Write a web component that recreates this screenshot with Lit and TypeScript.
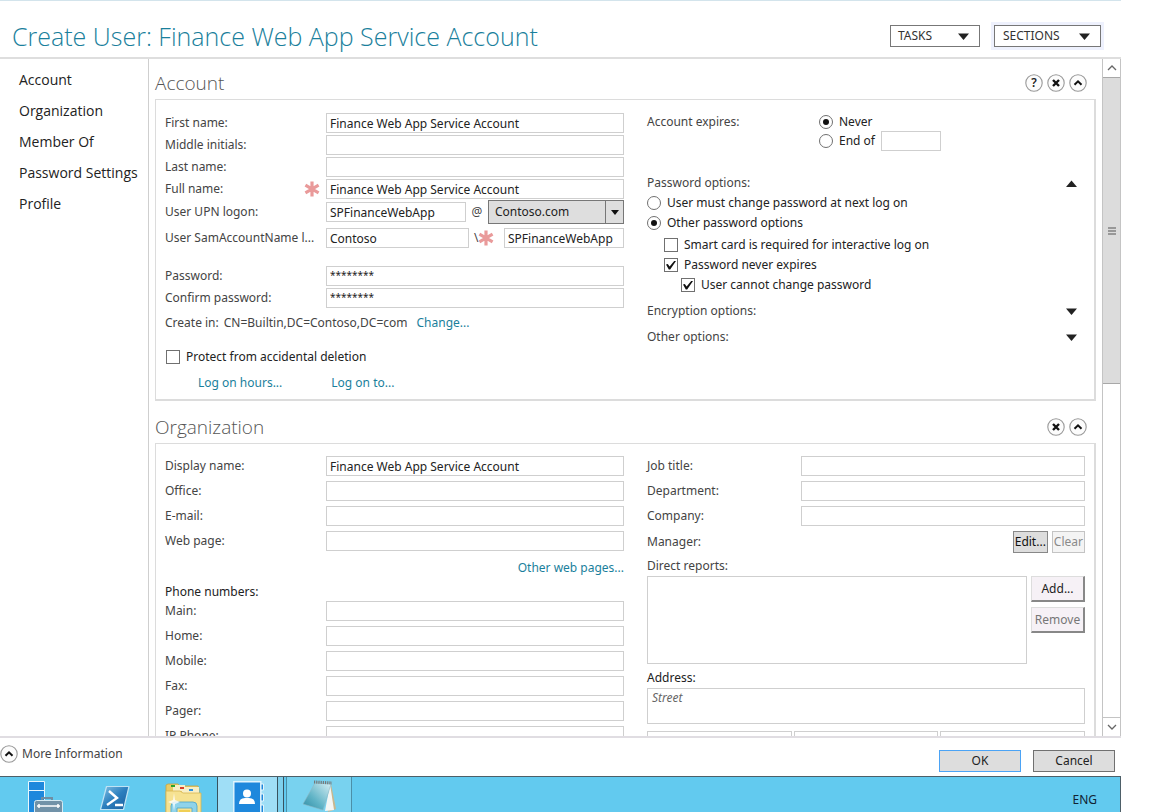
import { LitElement, html, css, svg, nothing } from "lit";
import { customElement, property } from "lit/decorators.js";

const controls = css`
  * { box-sizing: border-box; }
  button, input, select, textarea { font: inherit; color: inherit; margin: 0; border-radius: 0; }
  input[type="text"], textarea {
    width: 100%; min-width: 0; height: 20px; padding: 0 3px; border: 1px solid #cfcfcf;
    background: #fff; color: #222; outline: none; display: block;
  }
  input::placeholder, textarea::placeholder { font-style: italic; color: #666; opacity: 1; }
  a { color: #1a7f9c; text-decoration: none; }
  a:hover { text-decoration: underline; }
  input[type="radio"], input[type="checkbox"] {
    appearance: none; flex: none; width: 14px; height: 14px; border: 1px solid #707070;
    background: #fff; display: grid; place-items: center;
  }
  input[type="radio"] { border-radius: 50%; }
  input[type="radio"]:checked::before {
    content: ""; width: 6px; height: 6px; border-radius: 50%; background: #111;
  }
  input[type="checkbox"]:checked::before {
    content: ""; width: 10px; height: 9px; background: #111;
    clip-path: polygon(0 45%, 18% 40%, 36% 66%, 86% 0, 100% 5%, 42% 100%, 28% 100%);
  }
`;

const glyphs = {
  help: svg`<text x="9" y="13" text-anchor="middle" font-size="12" font-weight="600" fill="#222">?</text>`,
  close: svg`<path d="M6 6l6 6M12 6l-6 6" stroke="#111" stroke-width="2.4" fill="none"/>`,
  up: svg`<path d="M5.5 10.8L9 7.3l3.5 3.5" stroke="#111" stroke-width="2" fill="none"/>`,
};

@customElement("round-button")
export class RoundButton extends LitElement {
  @property() kind: keyof typeof glyphs = "up";
  @property() label = "";
  static styles = [controls, css`
    :host { display: block; }
    button { display: block; padding: 0; border: 0; background: none; width: 18px; height: 18px; }
    svg { display: block; }
  `];
  render() {
    return html`<button aria-label=${this.label}>
      <svg width="18" height="18" viewBox="0 0 18 18">
        <circle cx="9" cy="9" r="8.2" fill="#fcfcfc" stroke="#999" stroke-width="1.1"/>
        ${glyphs[this.kind]}
      </svg></button>`;
  }
}

@customElement("form-section")
export class FormSection extends LitElement {
  @property() heading = "";
  @property({ type: Boolean }) help = false;
  static styles = css`
    :host { display: block; }
    .head { display: flex; align-items: center; gap: 4px; height: 32px; padding-right: 9px; }
    h2 { flex: 1; margin: 0; font: 300 19px/26px "Open Sans", sans-serif; color: #555; }
    .panel {
      border: 1px solid #dcdcdc; border-width: 1px 2px 2px 1px; padding: 12px 9px 6px;
      display: grid; grid-template-columns: 459fr 438fr; column-gap: 23px;
    }
  `;
  render() {
    return html`
      <div class="head">
        <h2>${this.heading}</h2>
        ${this.help ? html`<round-button kind="help" label="Help"></round-button>` : nothing}
        <round-button kind="close" label="Remove section"></round-button>
        <round-button kind="up" label="Collapse section"></round-button>
      </div>
      <div class="panel"><slot name="left"></slot><slot name="right"></slot></div>`;
  }
}

const star = html`<svg class="star" width="16" height="16" viewBox="0 0 16 16" aria-label="Required">
  <path d="M8 0.5v15M1.4 4.2l13.2 7.6M14.6 4.2L1.4 11.8" stroke="#e99a9a" stroke-width="3.2" fill="none"/></svg>`;

const triangle = (up: boolean) => html`<svg class="tri" width="11" height="7" viewBox="0 0 11 7">
  <path d=${up ? "M0 7L5.5 0.5 11 7z" : "M0 0.5h11L5.5 7z"} fill="#222"/></svg>`;

@customElement("account-form")
export class AccountForm extends LitElement {
  static styles = [controls, css`
    :host { display: block; }
    .row { display: grid; grid-template-columns: 161px 1fr; align-items: center; height: 22px; }
    .row.upn { height: 24px; }
    .row.sam { height: 28px; }
    .row > label { display: flex; justify-content: space-between; align-items: center; padding-right: 6px; white-space: nowrap; }
    .star { flex: none; display: block; }
    .pair { display: flex; align-items: center; min-width: 0; }
    .pair input.grow { flex: 1 1 0; }
    .at { width: 22px; text-align: center; }
    .slash { flex: none; width: 35px; display: flex; align-items: center; padding-left: 5px; }
    .combo { flex: none; width: 136px; height: 24px; display: grid; grid-template-columns: 1fr 18px; background: #dedede; border: 1px solid #777; }
    .combo select { grid-area: 1 / 1 / 2 / 3; appearance: none; border: 0; background: none; padding: 0 6px; color: #222; outline: none; min-width: 0; }
    .combo .drop { grid-area: 1 / 2; border-left: 1px solid #777; display: grid; place-items: center; pointer-events: none; }
    .pair input.short { flex: none; width: 120px; }
    .space { padding-top: 13px; }
    .row input.secret { font-size: 10px; padding-bottom: 2px; }
    .create { display: flex; align-items: center; gap: 5px; height: 28px; }
    .create a { margin-left: 4px; }
    .tick { display: flex; align-items: center; gap: 6px; height: 20px; color: #222; }
    .protect { margin: 10px 0 6px 1px; }
    .links { display: flex; gap: 49px; padding-left: 33px; height: 20px; align-items: center; }
    .expires { display: grid; grid-template-columns: 172px 1fr; height: 61px; align-items: start; }
    .expires > span { line-height: 19px; }
    .choice { display: flex; align-items: center; gap: 6px; height: 19px; color: #222; }
    .choice input[type="text"] { width: 60px; }
    .fold { display: flex; justify-content: space-between; align-items: center; height: 20px; padding-right: 8px; }
    .fold.more { height: 26px; }
    .tick.one { margin-left: 17px; }
    .tick.two { margin-left: 34px; }
    .group { margin: 2px 0 3px; }
  `];
  render() {
    return html`<form-section heading="Account" help>
      <div slot="left">
        <div class="row"><label for="first">First name:</label><input id="first" type="text" .value=${"Finance Web App Service Account"}></div>
        <div class="row"><label for="mid">Middle initials:</label><input id="mid" type="text"></div>
        <div class="row"><label for="last">Last name:</label><input id="last" type="text"></div>
        <div class="row"><label for="full">Full name: ${star}</label><input id="full" type="text" .value=${"Finance Web App Service Account"}></div>
        <div class="row upn"><label for="upn">User UPN logon:</label>
          <div class="pair"><input class="grow" id="upn" type="text" .value=${"SPFinanceWebApp"}>
            <span class="at">@</span>
            <span class="combo"><select aria-label="UPN suffix"><option>Contoso.com</option></select>
              <span class="drop"><svg width="8" height="5" viewBox="0 0 8 5"><path d="M0 0h8L4 5z" fill="#111"/></svg></span></span></div></div>
        <div class="row sam"><label for="sam">User SamAccountName l...</label>
          <div class="pair"><input class="grow" id="sam" type="text" .value=${"Contoso"}>
            <span class="slash">\\${star}</span>
            <input class="short" aria-label="Account name" type="text" .value=${"SPFinanceWebApp"}></div></div>
        <div class="space"></div>
        <div class="row"><label for="pw">Password:</label><input class="secret" id="pw" type="text" .value=${"********"}></div>
        <div class="row"><label for="pw2">Confirm password:</label><input class="secret" id="pw2" type="text" .value=${"********"}></div>
        <div class="create"><span>Create in:</span><span>CN=Builtin,DC=Contoso,DC=com</span><a href="#">Change...</a></div>
        <label class="tick protect"><input type="checkbox">Protect from accidental deletion</label>
        <div class="links"><a href="#">Log on hours...</a><a href="#">Log on to...</a></div>
      </div>
      <div slot="right">
        <div class="expires"><span>Account expires:</span>
          <div><label class="choice"><input type="radio" name="exp" checked>Never</label>
            <div class="choice"><input type="radio" name="exp" id="end"><label for="end">End of</label><input type="text" aria-label="End date"></div></div></div>
        <div class="fold" >Password options: ${triangle(true)}</div>
        <label class="tick"><input type="radio" name="opt">User must change password at next log on</label>
        <label class="tick"><input type="radio" name="opt" checked>Other password options</label>
        <div class="group">
          <label class="tick one"><input type="checkbox">Smart card is required for interactive log on</label>
          <label class="tick one"><input type="checkbox" checked>Password never expires</label>
          <label class="tick two"><input type="checkbox" checked>User cannot change password</label>
        </div>
        <div class="fold more">Encryption options: ${triangle(false)}</div>
        <div class="fold more">Other options: ${triangle(false)}</div>
      </div>
    </form-section>`;
  }
}

@customElement("organization-form")
export class OrganizationForm extends LitElement {
  static styles = [controls, css`
    :host { display: block; }
    .row { display: grid; grid-template-columns: 161px 1fr; align-items: center; height: 20px; margin-bottom: 5px; }
    .row.wide { grid-template-columns: 154px 1fr; }
    .other { display: flex; justify-content: flex-end; height: 24px; align-items: center; }
    .phones { line-height: 18px; margin-top: 3px; color: #222; }
    .buttons { display: flex; justify-content: flex-end; gap: 4px; }
    .btn { height: 22px; padding: 0 1px; border: 1px solid #888; background: #ddd; color: #111; }
    .btn:disabled { color: #8a8a8a; background: #f4f4f4; border-color: #c4c4c4; }
    .caption { line-height: 20px; }
    .dark { color: #222; margin-top: 4px; }
    .reports { display: grid; grid-template-columns: 1fr 54px; gap: 4px; }
    .reports select { height: 88px; width: 100%; border: 1px solid #cfcfcf; background: #fff; outline: none; display: block; }
    .side { display: flex; flex-direction: column; gap: 5px; }
    .raised { height: 26px; padding: 0; background: #f6f1f6; border: 1px solid #ddd; border-right: 2px solid #888; border-bottom: 2px solid #888; color: #222; }
    .raised:disabled { color: #777; }
    textarea { height: 36px; resize: none; padding: 1px 4px; }
    .triple { display: grid; grid-template-columns: 1fr 1fr 1fr; gap: 2px; margin-top: 7px; }
  `];
  private line(label: string, id: string, value = "", wide = false) {
    return html`<div class="row ${wide ? "wide" : ""}"><label for=${id}>${label}</label><input id=${id} type="text" .value=${value}></div>`;
  }
  render() {
    return html`<form-section heading="Organization">
      <div slot="left">
        ${this.line("Display name:", "dn", "Finance Web App Service Account")}
        ${this.line("Office:", "of")}${this.line("E-mail:", "em")}${this.line("Web page:", "wp")}
        <div class="other"><a href="#">Other web pages...</a></div>
        <div class="phones">Phone numbers:</div>
        ${["Main:", "Home:", "Mobile:", "Fax:", "Pager:", "IP Phone:"].map((l, i) => this.line(l, `ph${i}`))}
      </div>
      <div slot="right">
        ${this.line("Job title:", "jt", "", true)}${this.line("Department:", "dp", "", true)}${this.line("Company:", "co", "", true)}
        <div class="row wide"><span>Manager:</span><div class="buttons"><button class="btn">Edit...</button><button class="btn" disabled>Clear</button></div></div>
        <div class="caption"><label for="dr">Direct reports:</label></div>
        <div class="reports"><select id="dr" size="4"></select>
          <div class="side"><button class="raised">Add...</button><button class="raised" disabled>Remove</button></div></div>
        <div class="caption dark"><label for="ad">Address:</label></div>
        <textarea id="ad" placeholder="Street"></textarea>
        <div class="triple"><input type="text" aria-label="City"><input type="text" aria-label="State"><input type="text" aria-label="Postal code"></div>
      </div>
    </form-section>`;
  }
}

@customElement("task-bar")
export class TaskBar extends LitElement {
  static styles = [controls, css`
    :host { display: flex; height: 36px; overflow: hidden; background: #62caef; border: 1px solid #4d5f68; border-width: 1px 1px 0 0; color: #123; }
    nav { display: flex; padding-left: 10px; }
    button { border: 0; padding: 0; background: none; width: 69px; height: 35px; display: flex; justify-content: center; overflow: hidden; }
    button svg { flex: none; display: block; }
    .active { width: 67px; background: #9fdef6; border: 1px solid #38525e; border-width: 0 1px; padding-right: 4px; }
    .open { width: 66px; margin-left: 2px; background: #78d2ef; border: 1px solid #4b8fa8; border-width: 0 1px; }
    .active { box-shadow: inset -5px 0 0 #7fd0ec, inset -6px 0 0 #38525e; }
    .lang { margin-left: auto; padding-right: 23px; line-height: 45px; color: #123; }
  `];
  render() {
    return html`<nav>
      <button aria-label="Server Manager"><svg width="38" height="38" viewBox="0 0 38 38">
        <g fill="#1e88dc" stroke="#e8f7fd" stroke-width="1"><path d="M2.5 4.5h16v9h-16zM2.5 13.5h16v26h-16z"/></g>
        <path d="M16 24v-3h10v3" fill="none" stroke="#6f8ea3" stroke-width="2"/>
        <rect x="8.5" y="23.500" width="28" height="18" rx="2" fill="#7192a8" stroke="#d5eaf3"/>
        <path d="M11 29h23M13 27v4M32 27v4" stroke="#fff" stroke-width="1.500"/></svg></button>
      <button aria-label="PowerShell"><svg width="34" height="36" viewBox="0 0 34 36">
        <defs><linearGradient id="ps" x1="0" y1="0" x2="1" y2="1"><stop offset="0" stop-color="#86c4e6"/><stop offset=".5" stop-color="#2b7fbe"/><stop offset="1" stop-color="#1a5c9c"/></linearGradient></defs>
        <path d="M9.500 9.500h22.500l-5.500 23H3.500z" fill="url(#ps)" stroke="#bfe3f4" stroke-width="1.200" stroke-linejoin="round"/>
        <path d="M12 14l8 7-10 7M18 28h8" fill="none" stroke="#fff" stroke-width="2.400"/></svg></button>
      <button aria-label="File Explorer"><svg width="38" height="36" viewBox="0 0 38 36">
        <path d="M2 12V8l2-1h10l2 2h18l1 3v24H2z" fill="#e8cc68" stroke="#c9a23c" stroke-width=".8"/>
        <path d="M18 10h17v6H18zM9 8h12v6H9z" fill="#f8efc6"/>
        <path d="M7 8h4v2H7z" fill="#2ba52b"/><path d="M16 10h4v2h-4z" fill="#d9402c"/><path d="M25 12h4v2h-4z" fill="#2e93dd"/>
        <path d="M2 14h14l3 2h18v22H2z" fill="#f6e291" stroke="#d8b650" stroke-width=".8"/>
        <path d="M7 36V29q0-4 4-4h18q4 0 4 4v9h-5v-7H13v7z" fill="#8fd3ea" stroke="#4aa3c8" stroke-width=".8"/>
        <path d="M15 33h11v5H15z" fill="#f0cf55"/>
        <path d="M10 16l1 7 5 2-5 2-1 7-1-7-5-2 5-2z" fill="#fff" opacity=".8"/></svg></button>
      <button class="active" aria-label="Active Directory Administrative Center"><svg width="32" height="36" viewBox="0 0 32 36">
        <path d="M.8 4.800h27V40H.8z" fill="#1e88dc" stroke="#e3f5fd" stroke-width="1.400"/>
        <circle cx="14" cy="16.500" r="4" fill="#fff"/><path d="M6 27q0-6 6-6h4q6 0 6 6z" fill="#fff"/>
        <path d="M28 7h2.500v6H28zM28 17h2.500v7H28zM28 28h2.500v8H28z" fill="#1e88dc" stroke="#e3f5fd"/></svg></button>
      <button class="open" aria-label="Notepad"><svg width="36" height="36" viewBox="0 0 36 36">
        <defs><linearGradient id="np" x1="1" y1="0" x2="0" y2="1"><stop offset="0" stop-color="#d6eef4"/><stop offset=".6" stop-color="#5fb3c6"/><stop offset="1" stop-color="#2f8ba3"/></linearGradient></defs>
        <path d="M30 7l5 25-8 3z" fill="#c8b78e"/><path d="M29 7l4 26-9 1z" fill="#f4f6f4"/>
        <path d="M14 6l16 1-8 26-20-6z" fill="url(#np)" stroke="#8db7c2" stroke-width=".6"/>
        <path d="M13 5l18 1" stroke="#777" stroke-width="3" stroke-dasharray="1.200 1"/></svg></button>
      </nav><span class="lang">ENG</span>`;
  }
}

@customElement("app-root")
export class AppRoot extends LitElement {
  static styles = [controls, css`
    :host {
      display: flex; flex-direction: column; height: 100vh; padding-right: 31px; background: #fff;
      font: 12px/16px "Noto Sans", "Open Sans", sans-serif; color: #444; overflow: hidden;
    }
    header { display: flex; align-items: center; gap: 14px; height: 59px; padding: 14px 20px 0 12px; border-top: 1px solid #d3e4ec; border-bottom: 2px solid #dedede; }
    h1 { flex: 1; margin: 0; font: 300 25px/32px "Open Sans", sans-serif; color: #1a7f9c; white-space: nowrap; }
    .menu { height: 22px; display: flex; align-items: center; justify-content: space-between; padding: 0 10px 0 7px; border: 1px solid #777; background: #fff; color: #333; width: 90px; }
    .menu.focus { width: 107px; padding-left: 8px; box-shadow: 0 0 0 3px #eef1fd; }
    main { flex: 1; min-height: 0; display: grid; grid-template-columns: 149px 1fr 19px; border-bottom: 2px solid #e0dde2; }
    .side { border-right: 1px solid #cfcfcf; padding: 5px 0 0 19px; display: flex; flex-direction: column; }
    .side a { color: #222; font: 14px/31px "Open Sans", sans-serif; white-space: nowrap; }
    .content { overflow: auto; scrollbar-width: none; padding: 8px 6px 0; display: flex; flex-direction: column; gap: 10px; }
    .content > * { flex: none; }
    .bar { border: 1px solid #c4c4c4; border-width: 0 1px; display: flex; flex-direction: column; }
    .bar button { flex: none; height: 18px; padding: 0; border: 0; background: #fff; display: grid; place-items: center; }
    .room { flex: 1; border-bottom: 1px solid #c4c4c4; }
    .thumb { height: 48%; background: #dcdcdc; border: 1px solid #a8a8a8; border-width: 1px 0; display: grid; place-items: center; }
    footer { display: flex; align-items: center; height: 38px; padding: 7px 6px 0 0; }
    .more { display: flex; align-items: center; gap: 4px; flex: 1; align-self: flex-start; }
    .action { width: 82px; height: 22px; border: 1px solid #707070; background: #ddd; color: #222; margin-left: 12px; padding: 0; }
    .ok { border-color: #4ba3f5; }
  `];
  render() {
    return html`
      <header><h1>Create User: Finance Web App Service Account</h1>
        <button class="menu">TASKS ${triangle(false)}</button>
        <button class="menu focus">SECTIONS ${triangle(false)}</button></header>
      <main>
        <nav class="side">${["Account", "Organization", "Member Of", "Password Settings", "Profile"].map((t) => html`<a href="#">${t}</a>`)}</nav>
        <div class="content"><account-form></account-form><organization-form></organization-form></div>
        <div class="bar">
          <button aria-label="Scroll up"><svg width="10" height="8" viewBox="0 0 10 8"><path d="M1 6l4-4 4 4" fill="none" stroke="#666" stroke-width="1.300"/></svg></button>
          <div class="room"><div class="thumb"><svg width="8" height="8" viewBox="0 0 8 8"><path d="M0 1h8M0 4h8M0 7h8" stroke="#555"/></svg></div></div>
          <button aria-label="Scroll down"><svg width="10" height="8" viewBox="0 0 10 8"><path d="M1 2l4 4 4-4" fill="none" stroke="#666" stroke-width="1.300"/></svg></button>
        </div>
      </main>
      <footer><div class="more"><round-button kind="up" label="Expand"></round-button><span>More Information</span></div>
        <button class="action ok">OK</button><button class="action">Cancel</button></footer>
      <task-bar></task-bar>`;
  }
}
